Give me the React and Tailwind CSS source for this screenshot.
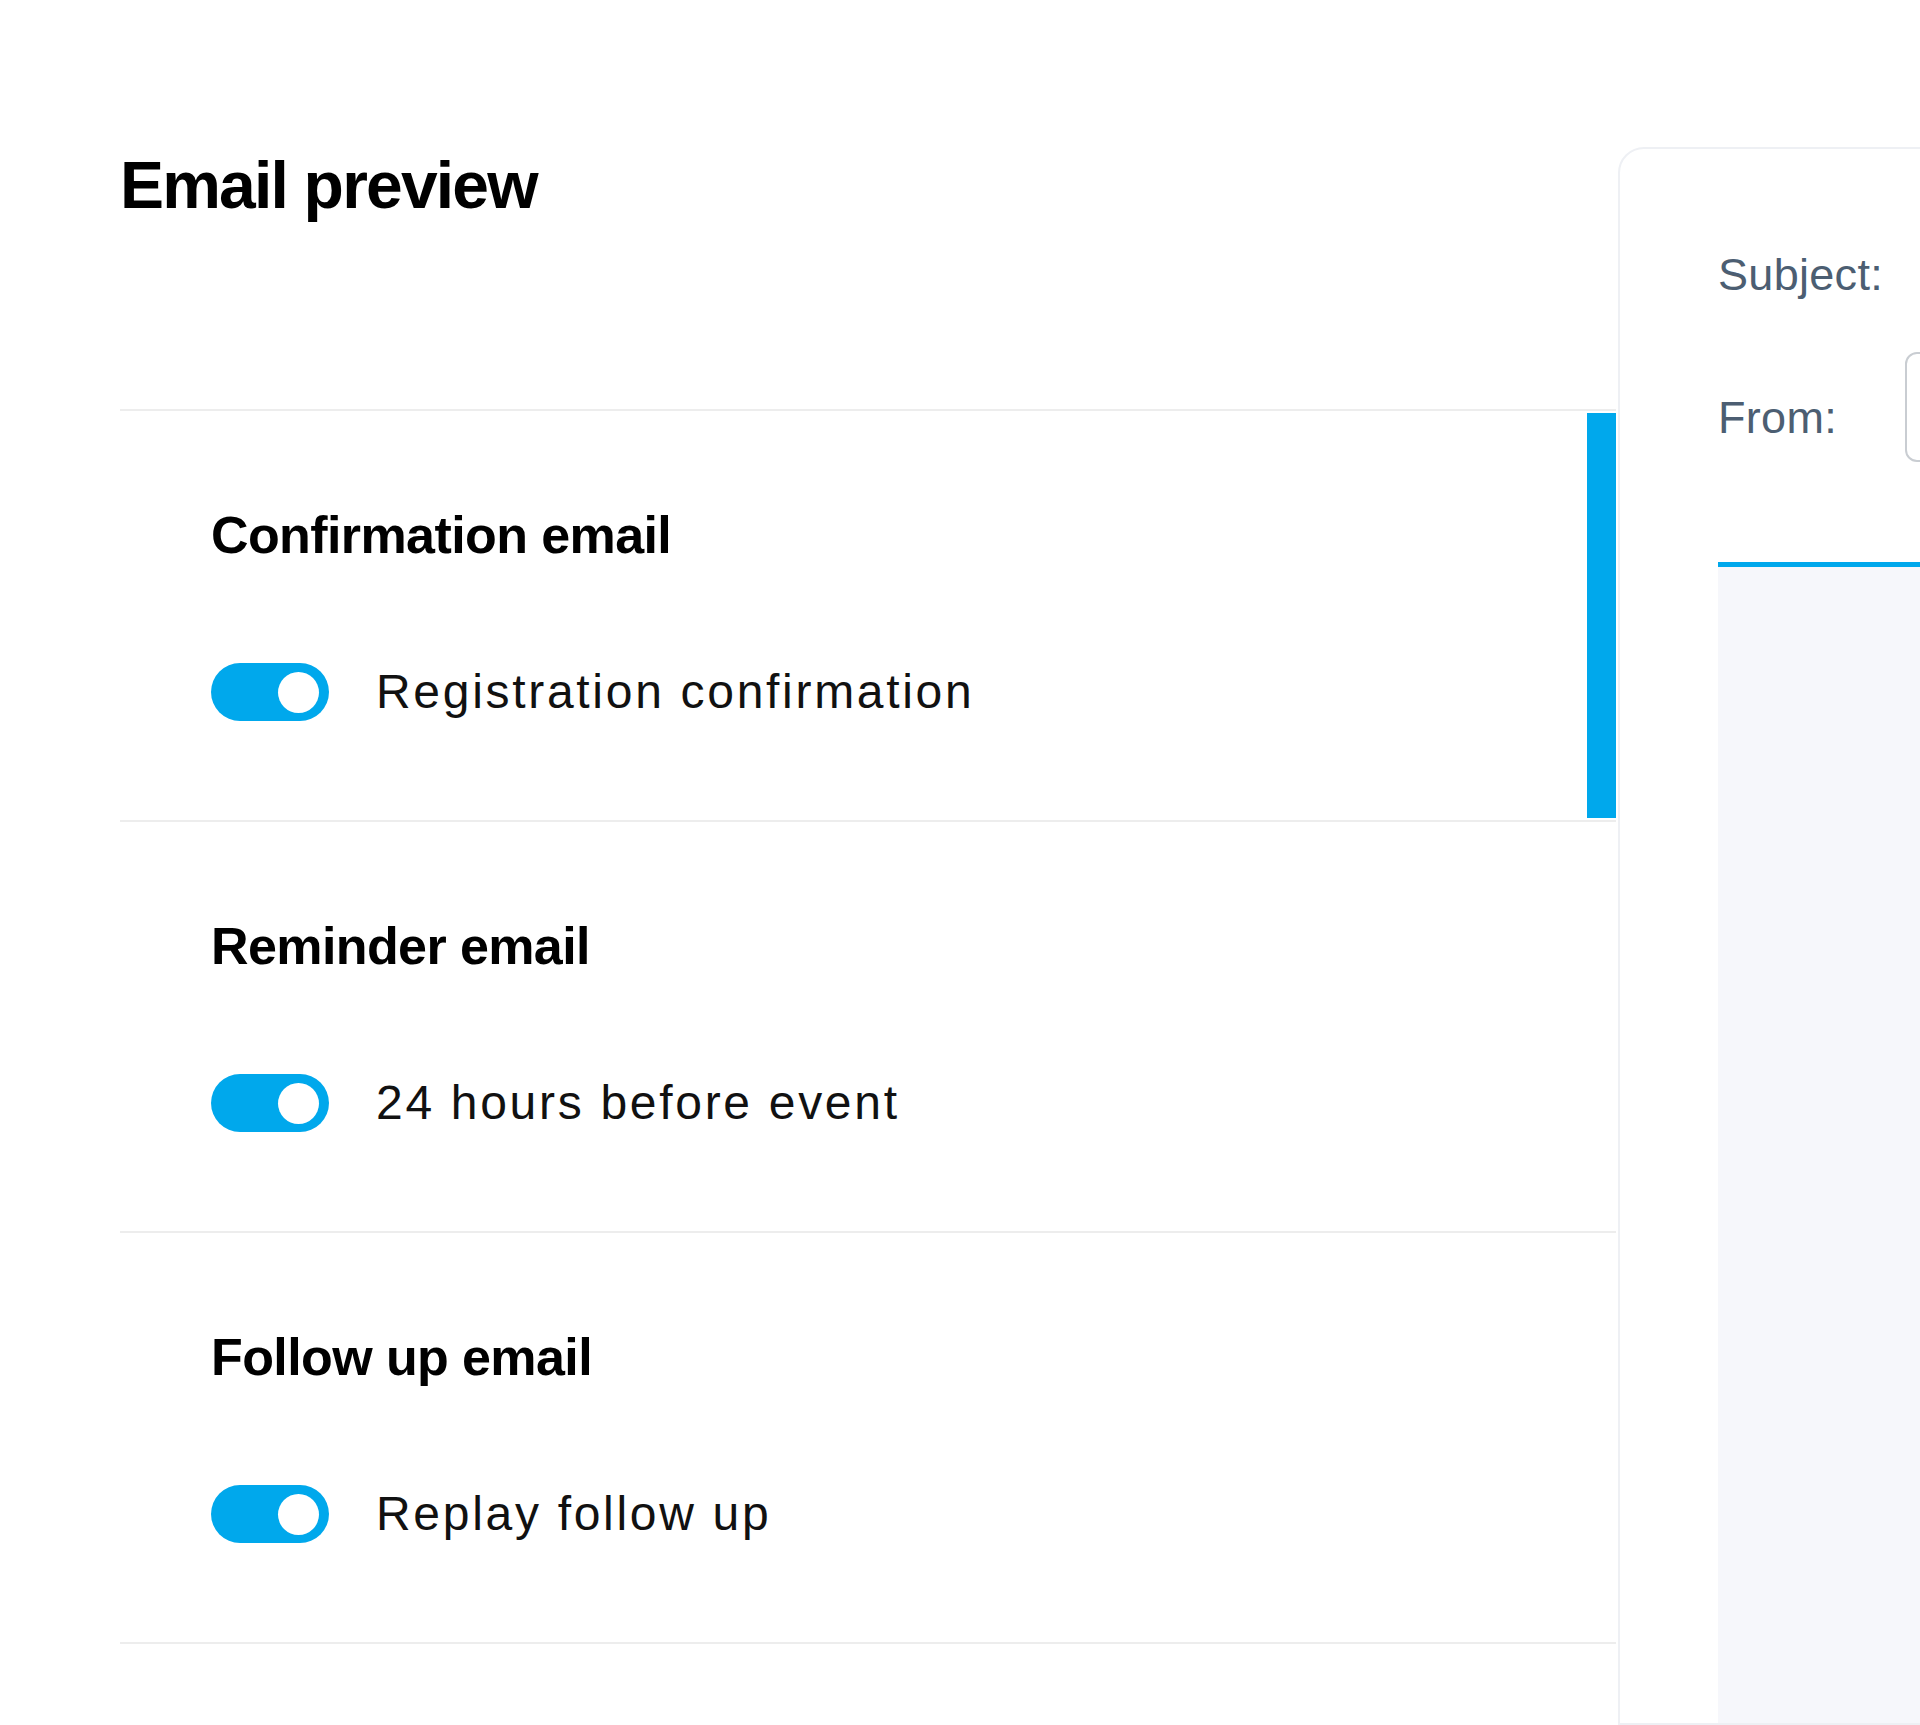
const emails = [
  { title: "Confirmation email", label: "Registration confirmation", active: true },
  { title: "Reminder email", label: "24 hours before event", active: false },
  { title: "Follow up email", label: "Replay follow up", active: false },
];

function Toggle() {
  return (
    <div className="w-[118px] h-[58px] rounded-full bg-[#00a8ec] flex items-center justify-end pr-[10px] shrink-0">
      <div className="w-[41px] h-[41px] rounded-full bg-white" />
    </div>
  );
}

export default function App() {
  return (
    <div className="w-[1920px] h-[1725px] overflow-hidden bg-white flex font-['Liberation_Sans',Arial,sans-serif]">
      {/* Left column */}
      <div className="ml-[120px] w-[1496px] shrink-0 pt-[152px]">
        <h1 className="text-[66px] leading-none font-bold tracking-[-1.8px] text-black">
          Email preview
        </h1>

        <div className="mt-[191px] border-t-2 border-[#ededed]">
          {emails.map((email) => (
            <div key={email.title} className="flex border-b-2 border-[#ededed]">
              <div className="flex-1 pl-[91px] pt-[98px] pb-[99px]">
                <h3 className="text-[52px] leading-none font-bold tracking-[-0.6px] text-black">
                  {email.title}
                </h3>
                <div className="mt-[102px] flex items-center gap-[47px]">
                  <Toggle />
                  <span className="text-[48px] leading-none tracking-[2.7px] text-[#111]">
                    {email.label}
                  </span>
                </div>
              </div>
              {email.active ? <div className="w-[29px] bg-[#00a8ec] my-[2px]" /> : null}
            </div>
          ))}
        </div>
      </div>

      {/* Preview card */}
      <div className="mt-[147px] ml-[2px] w-[420px] shrink-0 border-2 border-[#eef0f4] rounded-tl-[26px] flex flex-col pl-[98px] pt-[103px]">
        <div className="text-[45px] leading-none tracking-[0.3px] text-[#4c5e72]">Subject:</div>
        <div className="mt-[55px] flex items-start">
          <div className="w-[187px] shrink-0 mt-[43px] text-[45px] leading-none tracking-[0.3px] text-[#4c5e72]">
            From:
          </div>
          <div className="w-[200px] h-[110px] shrink-0 rounded-[12px] border-2 border-[#c9cdd2]" />
        </div>
        <div className="mt-[100px] flex-1 border-t-[5px] border-[#00a8ec] bg-[#f6f7fb]" />
      </div>
    </div>
  );
}
